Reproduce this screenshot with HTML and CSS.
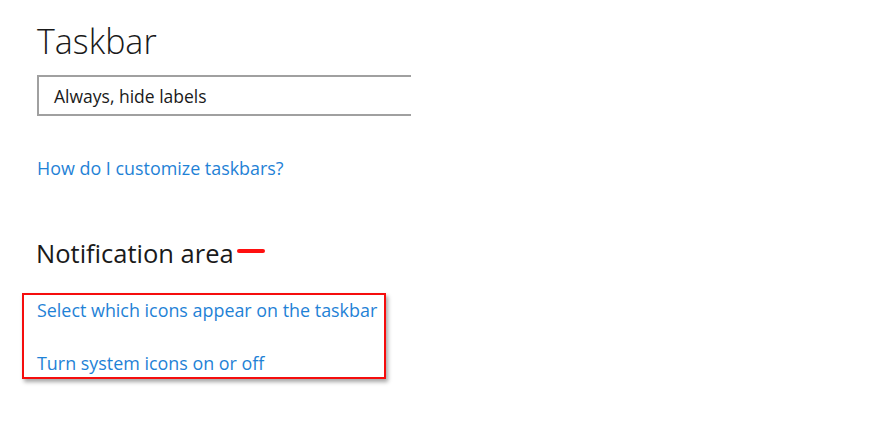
FILE: index.html
```html
<!DOCTYPE html>
<html lang="en">
<head>
<meta charset="utf-8">
<title>Taskbar settings</title>
<link rel="stylesheet" href="styles.css">
</head>
<body>
<main class="page">
  <h1 class="title">Taskbar</h1>
  <div class="combo">Always, hide labels</div>
  <a class="link help" href="#">How do I customize taskbars?</a>
  <h2 class="section">Notification area<span class="dash"></span></h2>
  <div class="highlight">
    <a class="link" href="#">Select which icons appear on the taskbar</a>
    <a class="link" href="#">Turn system icons on or off</a>
  </div>
</main>
</body>
</html>
```
FILE: styles.css
```css
html, body {
  margin: 0;
  background: #ffffff;
}
body {
  font-family: "Open Sans", "Noto Sans", sans-serif;
  color: #1a1a1a;
  width: 884px;
  height: 424px;
  overflow: hidden;
}
.page {
  padding: 18px 0 0 37px;
  display: flex;
  flex-direction: column;
  align-items: flex-start;
}
.title {
  margin: 0;
  font-weight: 300;
  font-size: 34px;
  line-height: 46px;
  color: #1a1a1a;
}
.combo {
  margin-top: 11px;
  box-sizing: border-box;
  width: 374px;
  height: 41px;
  border: 2px solid #a0a0a0;
  border-right: none;
  padding: 0 15px;
  display: flex;
  align-items: center;
  font-size: 17.5px;
  color: #1a1a1a;
}
.link {
  color: #1f82d6;
  text-decoration: none;
  font-size: 17.9px;
  line-height: 24px;
}
.help {
  margin-top: 40px;
}
.section {
  margin: 56px 0 0 -1px;
  font-weight: 400;
  font-size: 25.5px;
  line-height: 34px;
  display: flex;
  align-items: center;
}
.dash {
  width: 28px;
  height: 4px;
  background: #ff1010;
  border-radius: 2px;
  margin-left: 3px;
  margin-top: -4px;
}
.highlight {
  margin: 23px 0 0 -15px;
  box-sizing: border-box;
  width: 364px;
  height: 86px;
  border: 2px solid #f50d0d;
  box-shadow: 2px 3px 4px rgba(0, 0, 0, 0.35);
  padding: 3px 0 0 13px;
  display: flex;
  flex-direction: column;
  gap: 29px;
}
```
